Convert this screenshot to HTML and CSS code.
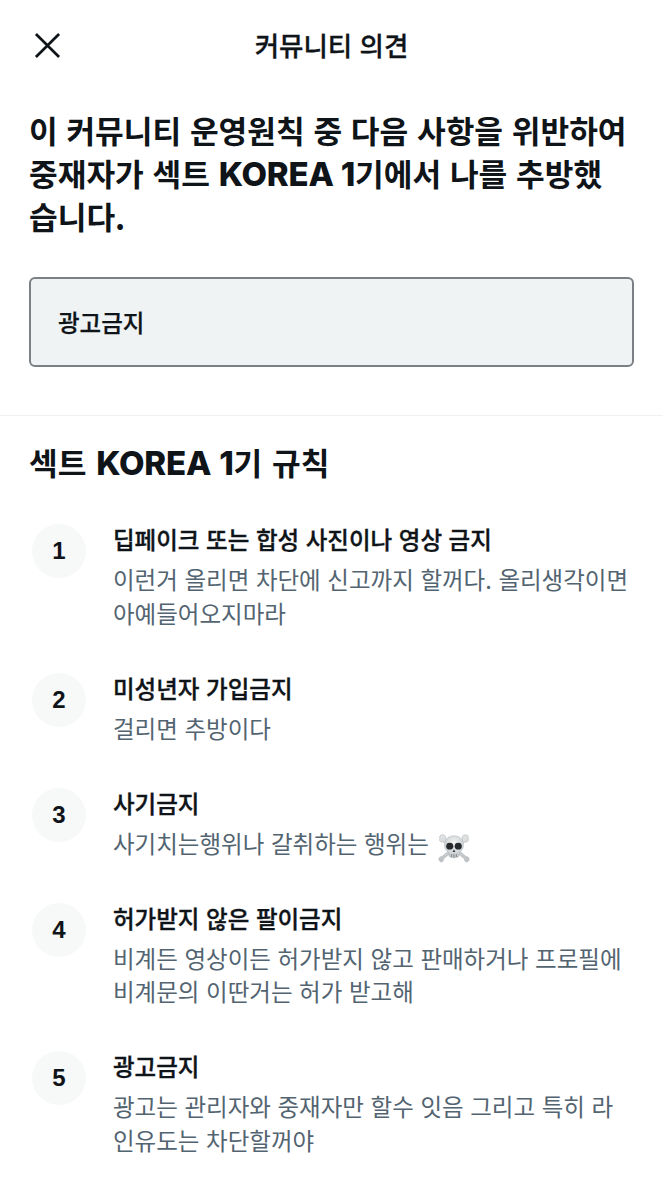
FILE: index.html
```html
<!DOCTYPE html>
<html lang="ko">
<head>
<meta charset="utf-8">
<title>커뮤니티 의견</title>
<link rel="stylesheet" href="styles.css">
</head>
<body>
<div class="page">
  <header class="topbar">
    <svg class="close" viewBox="0 0 28 28" aria-hidden="true"><path d="M2 2 L26 26 M26 2 L2 26"/></svg>
    <h1 class="topbar-title">커뮤니티 의견</h1>
  </header>
  <section class="notice">
    <h2 class="notice-text">이 커뮤니티 운영원칙 중 다음 사항을 위반하여 중재자가 섹트 <span class="latin">KOREA 1</span>기에서 나를 추방했<br>습니다.</h2>
    <div class="reason">광고금지</div>
  </section>
  <section class="rules">
    <h2 class="rules-title">섹트 <span class="latin">KOREA 1</span>기 규칙</h2>
    <ol class="rule-list">
      <li class="rule">
        <span class="num">1</span>
        <div class="rule-body">
          <div class="rule-name">딥페이크 또는 합성 사진이나 영상 금지</div>
          <p class="rule-desc">이런거 올리면 차단에 신고까지 할꺼다. 올리생각이면 아예들어오지마라</p>
        </div>
      </li>
      <li class="rule">
        <span class="num">2</span>
        <div class="rule-body">
          <div class="rule-name">미성년자 가입금지</div>
          <p class="rule-desc">걸리면 추방이다</p>
        </div>
      </li>
      <li class="rule">
        <span class="num">3</span>
        <div class="rule-body">
          <div class="rule-name">사기금지</div>
          <p class="rule-desc">사기치는행위나 갈취하는 행위는
            <svg class="skull" viewBox="0 0 34 32" aria-hidden="true">
              <defs>
                <linearGradient id="bone" x1="0" y1="0" x2="0" y2="1">
                  <stop offset="0" stop-color="#e2e4e5"/>
                  <stop offset="1" stop-color="#bcc0c2"/>
                </linearGradient>
                <radialGradient id="head" cx=".5" cy=".35" r=".7">
                  <stop offset="0" stop-color="#f6f7f7"/>
                  <stop offset="1" stop-color="#bdc1c3"/>
                </radialGradient>
              </defs>
              <!-- crossed bones with knobbed ends -->
              <g fill="url(#bone)" stroke="#a9adb0" stroke-width=".5">
                <path d="M5 1.500 C2.500 1 1 3.500 2 5.500 C.5 7.500 3 10 5.500 9 L28 27 C27.500 30 31 31.500 32.500 29 C34 27.500 32.500 24 29.800 24.500 L8 6 C9 3.500 7.500 1.500 5 1.500Z"/>
                <path d="M29 1.500 C31.500 1 33 3.500 32 5.500 C33.500 7.500 31 10 28.500 9 L6 27 C6.500 30 3 31.500 1.500 29 C0 27.500 1.500 24 4.200 24.500 L26 6 C25 3.500 26.500 1.500 29 1.500Z"/>
              </g>
              <!-- skull -->
              <path d="M17 2.500 C9.500 2.500 6.500 8 7 13.500 C7.300 16.500 9.200 18.800 11.300 19.800 L11.800 24.500 C14 26.500 20 26.500 22.200 24.500 L22.700 19.800 C24.800 18.800 26.700 16.500 27 13.500 C27.500 8 24.500 2.500 17 2.500Z" fill="url(#head)" stroke="#adb1b3" stroke-width=".5"/>
              <ellipse cx="12.500" cy="13.500" rx="3.800" ry="3.600" fill="#27292d"/>
              <ellipse cx="21.500" cy="13.500" rx="3.800" ry="3.600" fill="#27292d"/>
              <path d="M17 16.800 L15.500 19.800 H18.500Z" fill="#35383b"/>
              <path d="M14.500 21.800 V25 M17 21.800 V25.500 M19.500 21.800 V25" stroke="#6f7376" stroke-width=".8" fill="none"/>
            </svg>
          </p>
        </div>
      </li>
      <li class="rule">
        <span class="num">4</span>
        <div class="rule-body">
          <div class="rule-name">허가받지 않은 팔이금지</div>
          <p class="rule-desc">비계든 영상이든 허가받지 않고 판매하거나 프로필에 비계문의 이딴거는 허가 받고해</p>
        </div>
      </li>
      <li class="rule">
        <span class="num">5</span>
        <div class="rule-body">
          <div class="rule-name">광고금지</div>
          <p class="rule-desc">광고는 관리자와 중재자만 할수 잇음 그리고 특히 라인유도는 차단할꺼야</p>
        </div>
      </li>
    </ol>
  </section>
</div>
</body>
</html>
```
FILE: styles.css
```css
* { box-sizing: border-box; }

html, body {
  margin: 0;
  background: #fff;
}

body {
  font-family: "Noto Sans CJK KR", "Liberation Sans", sans-serif;
  color: #0f1419;
}

.page {
  width: 663px;
  height: 1200px;
  overflow: hidden;
}

.topbar {
  height: 91px;
  display: flex;
  align-items: center;
  justify-content: center;
  position: relative;
}

.close {
  position: absolute;
  left: 34px;
  top: 32px;
  width: 27px;
  height: 27px;
}

.close path {
  fill: none;
  stroke: #0f1419;
  stroke-width: 2.800;
}

.topbar-title {
  margin: 0 0 2px;
  font-size: 26.500px;
  line-height: 34px;
  font-weight: 500;
  -webkit-text-stroke: .3px #0f1419;
}

.notice {
  padding: 17px 29px 48px;
  border-bottom: 1px solid #eff1f2;
}

.notice-text {
  margin: 0 0 40px;
  font-size: 31.200px;
  line-height: 43px;
  font-weight: 700;
}

.latin {
  font-family: "Inter", "Liberation Sans", sans-serif;
  font-size: 1.060em;
  font-weight: 800;
  letter-spacing: -0.2px;
  line-height: 1;
}

.reason {
  height: 90px;
  display: flex;
  align-items: center;
  padding-left: 27px;
  background: #eff3f4;
  border: 2px solid #7c8084;
  border-radius: 6px;
  font-size: 23.500px;
  font-weight: 500;
  -webkit-text-stroke: .25px #0f1419;
}

.rules {
  padding: 24px 29px 0 32px;
}

.rules-title {
  margin: 0 0 37px -3px;
  font-size: 31.200px;
  line-height: 44px;
  font-weight: 700;
  word-spacing: 1px;
}

.rule-list {
  list-style: none;
  margin: 0;
  padding: 0;
  display: flex;
  flex-direction: column;
  gap: 39.500px;
}

.rule {
  display: flex;
  gap: 27px;
}

.num {
  flex: none;
  width: 54px;
  height: 54px;
  margin-top: 3px;
  display: flex;
  align-items: center;
  justify-content: center;
  border-radius: 50%;
  background: #f7f8f8;
  font-family: "Liberation Sans", sans-serif;
  font-size: 24px;
  font-weight: 700;
}

.rule-name {
  font-size: 23.500px;
  line-height: 36px;
  font-weight: 500;
  -webkit-text-stroke: .35px #0f1419;
}

.rule-desc {
  margin: 6px 0 0;
  width: 520px;
  font-size: 23.500px;
  line-height: 33.500px;
  color: #536471;
}

.skull {
  width: 32px;
  height: 31px;
  margin: -8px 0 -8px 3px;
  vertical-align: -3px;
}
```
